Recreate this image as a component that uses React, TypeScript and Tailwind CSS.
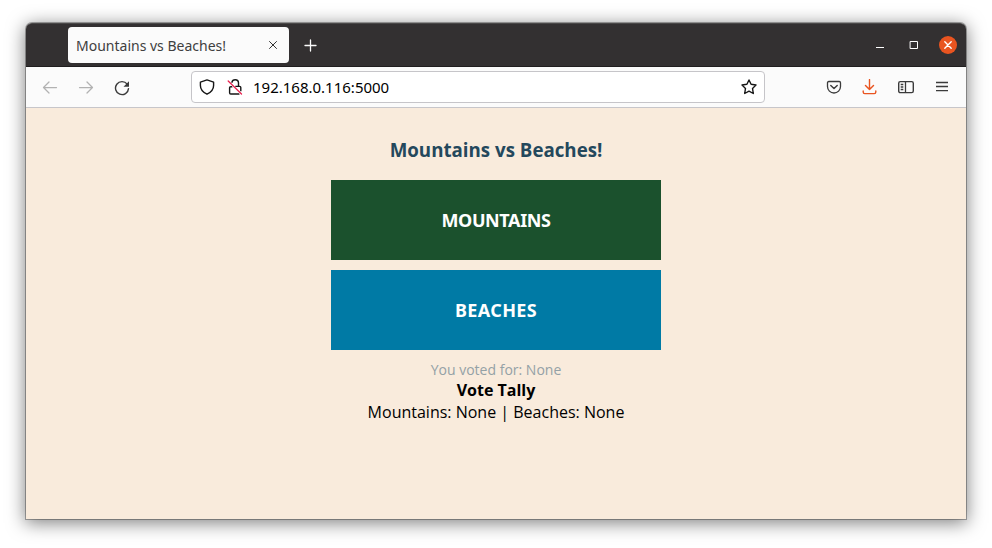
import React from "react";

type IconProps = { className?: string; children: React.ReactNode };

function Icon({ className = "", children }: IconProps) {
  return (
    <svg viewBox="0 0 16 16" fill="none" stroke="currentColor" strokeWidth="1.25" strokeLinecap="round" strokeLinejoin="round" className={`size-4 shrink-0 ${className}`}>
      {children}
    </svg>
  );
}

function TitleBar() {
  return (
    <header className="flex h-11 shrink-0 items-center rounded-t-md border-t border-b border-t-[#4a4848] border-b-[#201e1f] bg-[#333031] pl-[42px] pr-[9px]">
      <div className="flex h-9 w-[221px] items-center justify-between rounded bg-[#fbfbfb] pl-2 pr-2 text-[#3f3f3f]">
        <span className="whitespace-nowrap pt-0.5 font-['Noto_Sans',sans-serif] text-[14px] leading-5">Mountains vs Beaches!</span>
        <Icon className="text-[#333333]">
          <path d="M4.5 4.5l7 7m0-7l-7 7" strokeWidth="1" />
        </Icon>
      </div>
      <Icon className="ml-[14px] text-[#fbfbfb]">
        <path d="M7.5 3v11M2 8.500h11" strokeWidth="1.3" />
      </Icon>
      <div className="ml-auto flex items-center gap-[18px] text-white">
        <Icon>
          <path d="M4 10.5h8" strokeWidth="1" strokeLinecap="butt" />
        </Icon>
        <Icon>
          <path d="M4.5 4.5h7v7h-7z" strokeWidth="1" strokeLinejoin="miter" />
        </Icon>
        <div className="-ml-px flex size-[18px] items-center justify-center rounded-full bg-[#e95420]">
          <Icon>
            <path d="M4.8 4.800l6.400 6.400m0-6.400l-6.400 6.400" strokeWidth="1.4" />
          </Icon>
        </div>
      </div>
    </header>
  );
}

function ToolBar() {
  return (
    <div className="flex h-[41px] shrink-0 items-center border-b border-[#c7c6ca] bg-[#fbfbfb] pl-4 pr-4 text-[#3b3b3b]">
      <div className="flex gap-5 pt-px">
        <Icon className="text-[#b2b2b2]">
          <path d="M14.5 7.5h-13M7 2L1.500 7.500L7 13" />
        </Icon>
        <Icon className="text-[#b2b2b2]">
          <path d="M1.5 7.500h13M9 2L14.500 7.500L9 13" />
        </Icon>
        <Icon>
          <path d="M13.2 4.2A6.5 6.5 0 1 0 14.5 8.6" strokeWidth="1.4" />
          <path d="M15 1.2v5.500h-5.500z" fill="currentColor" stroke="none" />
        </Icon>
      </div>
      <div className="ml-[61px] flex h-8 w-[574px] items-center rounded border border-[#c6c5c9] bg-white pl-[7px] pr-[7px] text-[#161616]">
        <Icon>
          <path d="M8 .9l6.6 2.3v3.3c0 4-2.4 6.7-6.600 8.700c-4.200-2-6.600-4.700-6.600-8.700V3.200z" strokeWidth="1.4" />
        </Icon>
        <Icon className="ml-3">
          <path d="M4.900 3.400C5.200 1.700 6.400.7 8.200.7c2.100 0 3.300 1.400 3.300 3.300v3.200M5 7.700H3.700A1.100 1.100 0 0 0 2.600 8.800v5c0 .7.500 1.200 1.100 1.200h8.300M8.600 7.400h4c.7 0 1.200.5 1.200 1.200v3.200" strokeWidth="1.4" />
          <path d="M1.2 2l13.300 13" stroke="#ffffff" strokeWidth="2" />
          <path d="M1.2 2l13.300 13" stroke="#e9224f" strokeWidth="1.300" />
        </Icon>
        <span className="ml-2.5 whitespace-nowrap font-['Noto_Sans',sans-serif] text-[15px] leading-5 text-black">192.168.0.116:5000</span>
        <Icon className="ml-auto">
          <path d="M8 1l2.100 4.300l4.900.7l-3.500 3.400l.8 5.100L8 12.200l-4.300 2.300l.8-5.100L1 6l4.900-.7z" strokeWidth="1.4" />
        </Icon>
      </div>
      <div className="ml-auto flex gap-5">
        <Icon>
          <path d="M2.800 2.500h10.400c.8 0 1.300.5 1.300 1.300v3.700a6.500 6.500 0 0 1-13 0V3.800c0-.8.500-1.300 1.300-1.300z" strokeWidth="1.300" />
          <path d="M4.800 6.500l3.200 3l3.200-3" strokeWidth="1.500" />
        </Icon>
        <Icon className="text-[#e95420]">
          <path d="M7.500 .6v10M3.500 6.500L7.500 10.600l4-4.100M1.200 12v1c0 1 .7 1.600 1.600 1.600h9.400c1 0 1.600-.6 1.600-1.600v-1" strokeWidth="1.400" />
        </Icon>
        <Icon>
          <rect x=".7" y="2.600" width="14.600" height="11" rx="1.600" strokeWidth="1.400" />
          <path d="M7.500 2.500v11.200M2.700 5.500h2.600M2.700 8h2.600M2.700 10.500h2.600" strokeLinecap="butt" strokeWidth="1.300" />
        </Icon>
        <Icon>
          <path d="M2 3.500h12M2 7.500h12M2 11.700h12" strokeWidth="1.300" strokeLinecap="butt" />
        </Icon>
      </div>
    </div>
  );
}

function VotePage() {
  return (
    <main className="flex grow flex-col items-center bg-[#f9ebdc] font-['Open_Sans',sans-serif] text-black">
      <h3 className="mt-[29px] text-[18.72px] leading-[26px] font-bold text-[#24485c]">Mountains vs Beaches!</h3>
      <button className="mt-[17px] h-20 w-[330px] bg-[#1b512d] font-['Noto_Sans',sans-serif] text-[18px] font-bold tracking-[-0.4px] text-white">MOUNTAINS</button>
      <button className="mt-2.5 h-20 w-[330px] bg-[#007aa5] font-['Noto_Sans',sans-serif] text-[18px] font-bold tracking-[0.35px] text-white">BEACHES</button>
      <div className="mt-2.5 text-[14px] leading-5 text-[#94a1a6]">You voted for: None</div>
      <div className="-mt-px text-[16px] leading-[22px] font-bold">Vote Tally</div>
      <div className="text-[16px] leading-[22px]">Mountains: None | Beaches: None</div>
    </main>
  );
}

export default function App() {
  return (
    <div className="flex h-[548px] w-[992px] overflow-hidden bg-white pt-[23px] pl-[26px]">
      <div className="flex h-[496px] w-[940px] flex-col rounded-t-md shadow-[0_0_0_1px_rgba(0,0,0,0.3),0_3px_18px_1px_rgba(0,0,0,0.5)]">
        <TitleBar />
        <ToolBar />
        <VotePage />
      </div>
    </div>
  );
}
